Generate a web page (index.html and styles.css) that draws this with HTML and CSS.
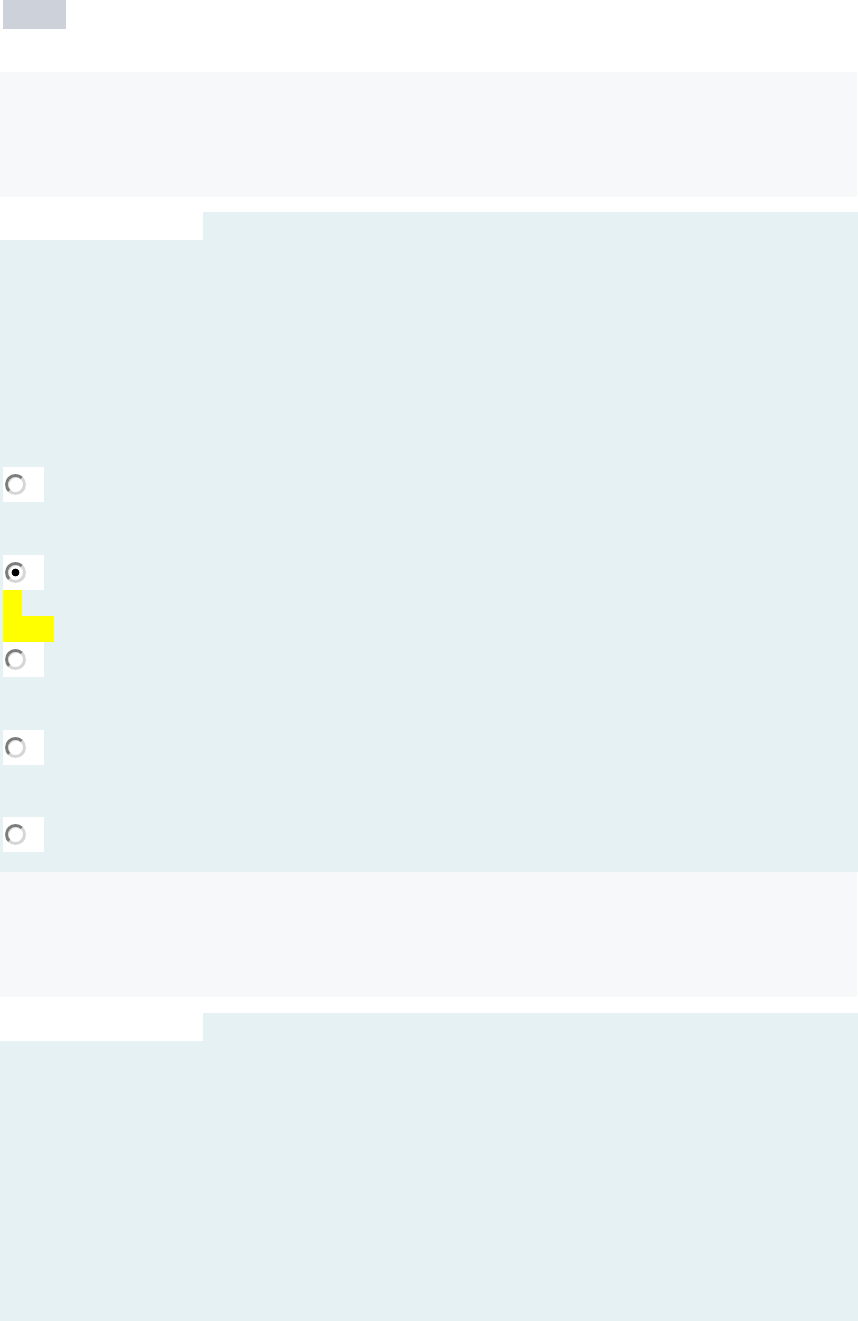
FILE: index.html
```html
<!DOCTYPE html>
<html lang="en">
<head>
    <meta charset="UTF-8">
    <meta name="viewport" content="width=device-width, initial-scale=1.0">
    <title>Quiz</title>
    <link rel="stylesheet" href="styles.css">
</head>
<body>

    <div class="logo"></div>

    <div class="banner"></div>

    <div class="section">
        <div class="section-head">
            <div class="head-spacer"></div>
            <div class="head-tab"></div>
        </div>
        <div class="section-body">
            <div class="options">
                <div class="option">
                    <label class="opt-box"><input type="radio" name="q1" class="radio"></label>
                    <div class="opt-text"></div>
                </div>
                <div class="option">
                    <label class="opt-box"><input type="radio" name="q1" class="radio" checked></label>
                    <div class="opt-text">
                        <span class="mark mark-short"></span>
                        <span class="mark mark-long"></span>
                    </div>
                </div>
                <div class="option">
                    <label class="opt-box"><input type="radio" name="q1" class="radio"></label>
                    <div class="opt-text"></div>
                </div>
                <div class="option">
                    <label class="opt-box"><input type="radio" name="q1" class="radio"></label>
                    <div class="opt-text"></div>
                </div>
                <div class="option">
                    <label class="opt-box"><input type="radio" name="q1" class="radio"></label>
                    <div class="opt-text"></div>
                </div>
            </div>
        </div>
    </div>

    <div class="banner banner-next"></div>

    <div class="section section-next">
        <div class="section-head">
            <div class="head-spacer"></div>
            <div class="head-tab"></div>
        </div>
        <div class="section-body section-body-tall"></div>
    </div>

</body>
</html>
```

FILE: styles.css
```css
body {
    font-family: "Liberation Sans", Arial, sans-serif;
    margin: 0;
    background: #fff;
}
.logo {
    width: 63px;
    height: 29px;
    margin-left: 3px;
    background-color: #cdd1da;
}
.banner {
    height: 125px;
    margin-top: 43px;
    margin-right: 1px;
    background-color: #f7f8fa;
}
.banner-next {
    margin-top: 0;
}
.section {
    margin-top: 15px;
}
.section-next {
    margin-top: 16px;
}
.section-head {
    display: flex;
    height: 28px;
}
.head-spacer {
    width: 203px;
}
.head-tab {
    flex: 1;
    background-color: #e6f1f3;
}
.section-body {
    background-color: #e6f1f3;
    padding: 227px 0 0 3px;
}
.section-body-tall {
    height: 300px;
    padding: 0;
}
.option {
    display: flex;
    flex-direction: column;
}
.opt-box {
    display: flex;
    align-items: center;
    width: 41px;
    height: 35px;
    padding-left: 2px;
    box-sizing: border-box;
    background-color: #fff;
}
.opt-text {
    height: 52.5px;
    display: flex;
    flex-direction: column;
    align-items: flex-start;
}
.option:last-child .opt-text {
    height: 20px;
}
.radio {
    appearance: none;
    -webkit-appearance: none;
    width: 21px;
    height: 21px;
    margin: 0;
    border: 3px solid;
    border-color: #7c7c7c #d6d6d6 #d6d6d6 #7c7c7c;
    border-radius: 50%;
    background: #fff;
    box-shadow: inset 1px 1px 0 #e2e2e2;
    box-sizing: border-box;
}
.radio:checked {
    background: radial-gradient(circle, #000 0 3.5px, #fff 4.2px);
}
.mark {
    display: block;
    background-color: #ffff00;
}
.mark-short {
    width: 19px;
    height: 27px;
}
.mark-long {
    width: 51px;
    height: 26px;
}
```
